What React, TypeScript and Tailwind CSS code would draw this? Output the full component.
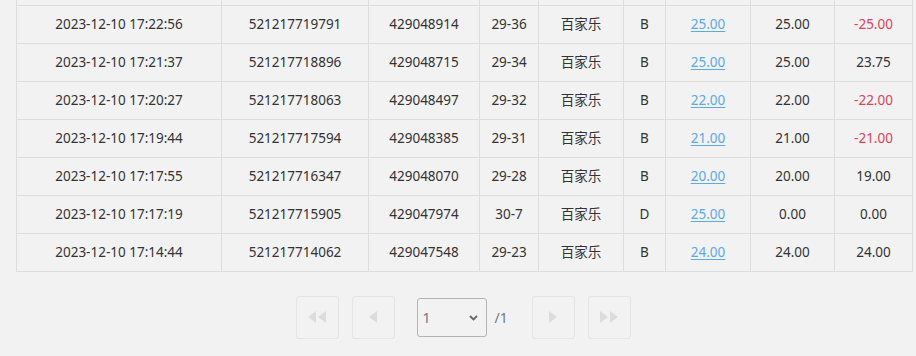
const rows = [
  { time: '2023-12-10 17:22:56', order: '521217719791', id: '429048914', round: '29-36', game: '百家乐', side: 'B', bet: '25.00', valid: '25.00', win: '-25.00' },
  { time: '2023-12-10 17:21:37', order: '521217718896', id: '429048715', round: '29-34', game: '百家乐', side: 'B', bet: '25.00', valid: '25.00', win: '23.75' },
  { time: '2023-12-10 17:20:27', order: '521217718063', id: '429048497', round: '29-32', game: '百家乐', side: 'B', bet: '22.00', valid: '22.00', win: '-22.00' },
  { time: '2023-12-10 17:19:44', order: '521217717594', id: '429048385', round: '29-31', game: '百家乐', side: 'B', bet: '21.00', valid: '21.00', win: '-21.00' },
  { time: '2023-12-10 17:17:55', order: '521217716347', id: '429048070', round: '29-28', game: '百家乐', side: 'B', bet: '20.00', valid: '20.00', win: '19.00' },
  { time: '2023-12-10 17:17:19', order: '521217715905', id: '429047974', round: '30-7', game: '百家乐', side: 'D', bet: '25.00', valid: '0.00', win: '0.00' },
  { time: '2023-12-10 17:14:44', order: '521217714062', id: '429047548', round: '29-23', game: '百家乐', side: 'B', bet: '24.00', valid: '24.00', win: '24.00' },
];

const widths = ['w-[205px]', 'w-[147px]', 'w-[111px]', 'w-[59px]', 'w-[85px]', 'w-[42px]', 'w-[85px]', 'w-[84px]', 'w-[78px]'];

function PageBtn({ children }: { children: React.ReactNode }) {
  return (
    <button className="w-[43px] h-[43px] border border-[#e4e4e4] rounded-[3px] bg-[#f2f2f2] flex items-center justify-center">
      {children}
    </button>
  );
}

export default function App() {
  const cell = 'border border-[#dddddd] text-center p-0 pt-[1px] h-[38px]';
  return (
    <div className="w-[916px] h-[356px] bg-[#f2f2f2] text-[#333] text-[13.5px] overflow-hidden" style={{ fontFamily: '"Noto Sans", "Noto Sans CJK SC", sans-serif' }}>
      <table className="ml-[16px] border-collapse table-fixed w-[896px]">
        <colgroup>
          {widths.map((w, i) => <col key={i} className={w} />)}
        </colgroup>
        <tbody>
          <tr>
            {widths.map((_, i) => <td key={i} className="border-x border-b border-[#dddddd] h-[5px] p-0" />)}
          </tr>
          {rows.map((r) => (
            <tr key={r.order}>
              <td className={cell}>{r.time}</td>
              <td className={cell}>{r.order}</td>
              <td className={cell}>{r.id}</td>
              <td className={cell}>{r.round}</td>
              <td className={cell}>{r.game}</td>
              <td className={cell}>{r.side}</td>
              <td className={cell}><a className="text-[#5aaae8] underline underline-offset-2">{r.bet}</a></td>
              <td className={cell}>{r.valid}</td>
              <td className={`${cell} ${r.win.startsWith('-') ? 'text-[#e0405a]' : ''}`}>{r.win}</td>
            </tr>
          ))}
        </tbody>
      </table>
      <div className="flex items-center justify-center mt-[24px] ml-[15px] w-[896px]">
        <PageBtn>
          <svg width="22" height="12" viewBox="0 0 22 12" fill="#dcdcdc"><path d="M10 0L2 6l8 6zM20 0l-8 6 8 6z" /></svg>
        </PageBtn>
        <div className="ml-[13px]">
          <PageBtn>
            <svg width="10" height="12" viewBox="0 0 10 12" fill="#dcdcdc"><path d="M9 0L1 6l8 6z" /></svg>
          </PageBtn>
        </div>
        <div className="ml-[22px] relative w-[70px] h-[39px] border border-[#b3b3b3] rounded-[3px] flex items-center pl-[5px] text-[#777] text-[14px]">
          1
          <svg className="absolute right-[8px] top-[16px]" width="9" height="6" viewBox="0 0 9 6" fill="none" stroke="#666" strokeWidth="1.8"><path d="M1 1l3.5 3.5L8 1" /></svg>
        </div>
        <span className="ml-[8px] w-[14px] text-[#777] text-[14px]">/1</span>
        <div className="ml-[23px]">
          <PageBtn>
            <svg width="10" height="12" viewBox="0 0 10 12" fill="#dcdcdc"><path d="M1 0l8 6-8 6z" /></svg>
          </PageBtn>
        </div>
        <div className="ml-[13px]">
          <PageBtn>
            <svg width="22" height="12" viewBox="0 0 22 12" fill="#dcdcdc"><path d="M2 0l8 6-8 6zM12 0l8 6-8 6z" /></svg>
          </PageBtn>
        </div>
      </div>
    </div>
  );
}
